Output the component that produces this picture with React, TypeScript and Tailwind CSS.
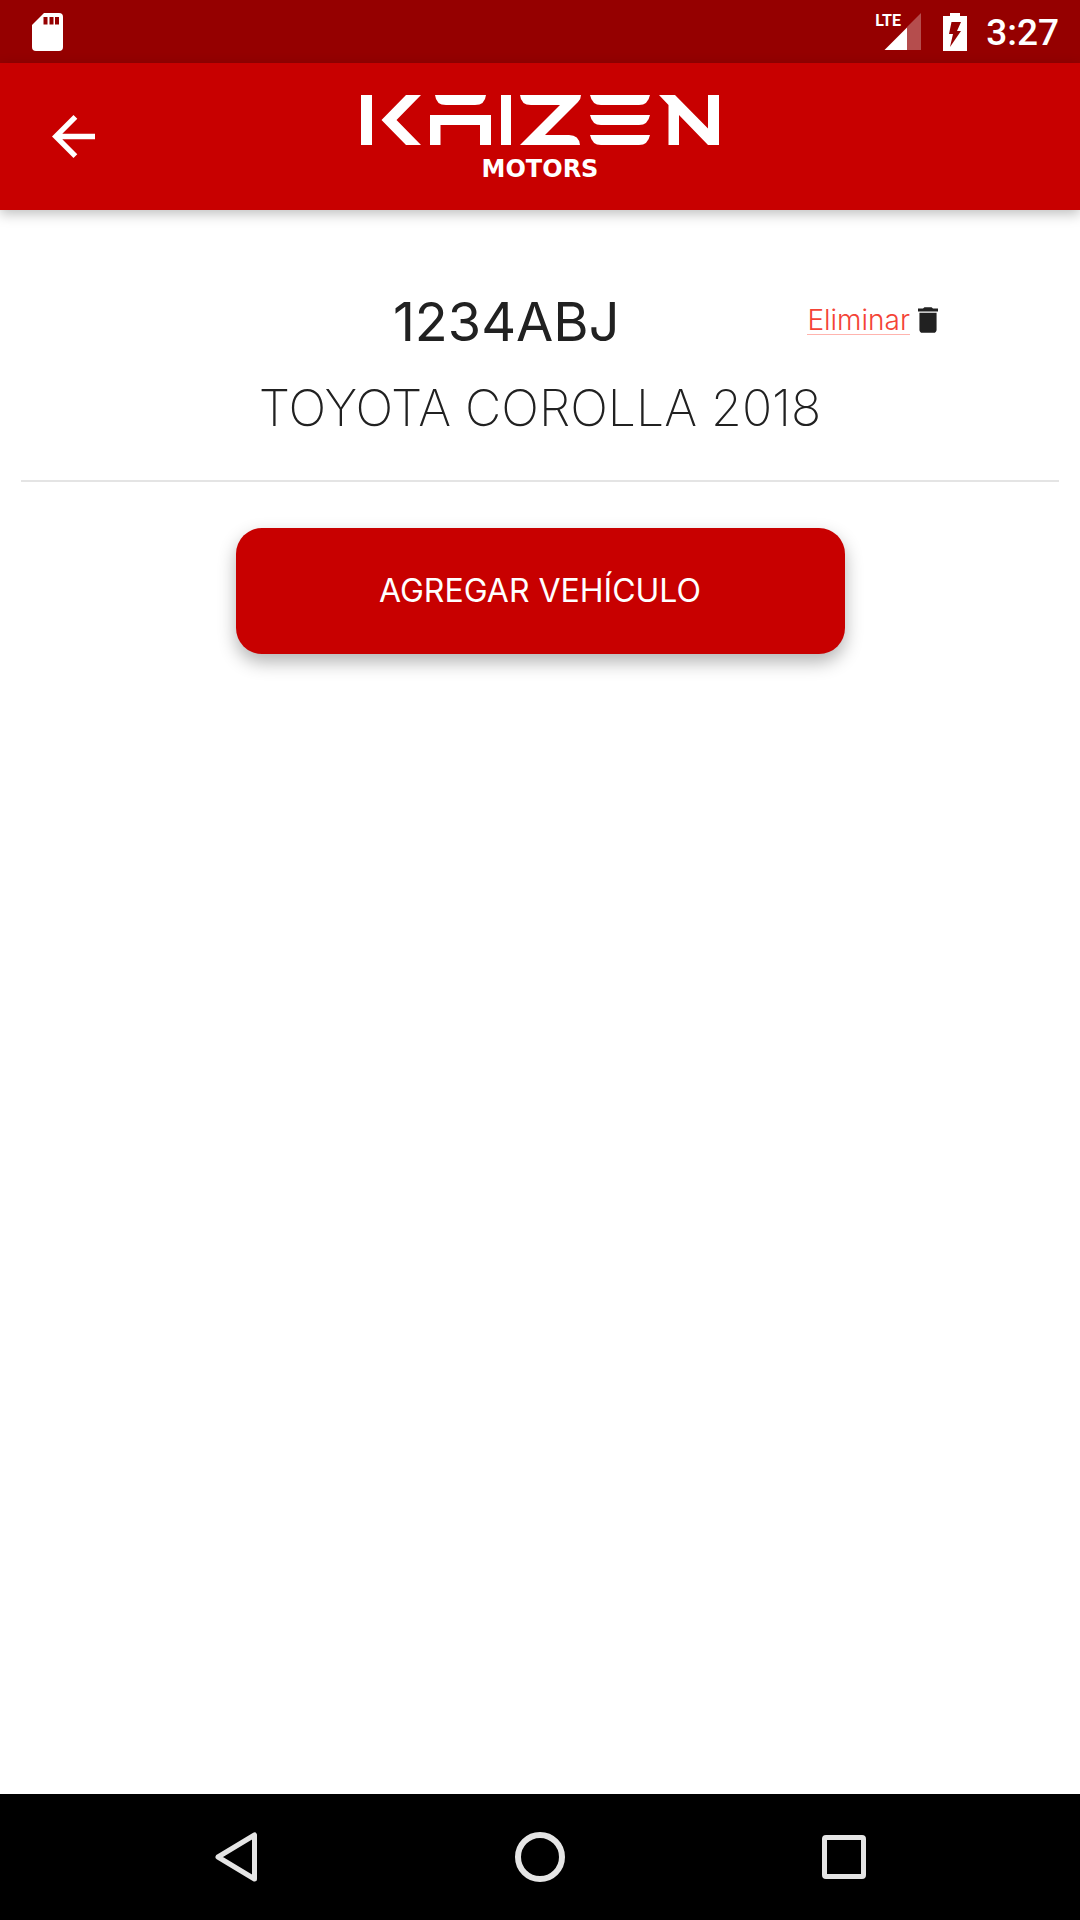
import { useState } from "react";

type Vehicle = {
  plate: string;
  model: string;
};

const initialVehicles: Vehicle[] = [{ plate: "1234ABJ", model: "TOYOTA COROLLA 2018" }];

function StatusBar() {
  return (
    <div className="flex h-[63px] items-center justify-between bg-[#950000] pl-8 pr-[21px] text-white">
      {/* SD card */}
      <svg className="h-[38px] w-8" viewBox="0 0 32 38" fill="none">
        <path
          d="M12 0H27Q31 0 31 4V34Q31 38 27 38H4Q0 38 0 34V12Z"
          fill="currentColor"
        />
        <path d="M11.500 4h4v7.500h-4zM17.500 4h4v7.500h-4zM23 4h4v7.500h-4z" fill="#950000" />
      </svg>

      <div className="flex items-center">
        <div className="relative h-[37px] w-[46px]">
          <span className="absolute left-0 top-0 font-['Roboto',sans-serif] text-base font-bold leading-4">
            LTE
          </span>
          <svg className="h-full w-full" viewBox="0 0 46 37" fill="currentColor">
            <path d="M46 0V37H32V14Z" opacity="0.3" />
            <path d="M32 14.500V37H9.500Z" />
          </svg>
        </div>
        <svg className="ml-[22px] h-[38px] w-6" viewBox="0 0 24 38" fill="none">
          <path d="M7 0H17V3H24V38H0V3H7Z" fill="currentColor" />
          <path d="M8.500 9H18L14 18H18L7 34L10 21H6Z" fill="#950000" />
        </svg>
        <span className="ml-[19px] pt-[3px] font-['Roboto',sans-serif] text-[37px] font-medium leading-[38px]">
          3:27
        </span>
      </div>
    </div>
  );
}

function Logo() {
  return (
    <div className="flex flex-col items-center pt-0.5 text-white">
      <svg className="h-[50px] w-[358px]" viewBox="0 0 358 50" fill="currentColor" role="img" aria-label="Kaizen">
        <path d="M0 0H11V50H0Z" />
        <path d="M45 0H60L35.500 25L60 50H45L20.500 25Z" />
        <path d="M74 0H125Q124 10 114 10H85Q75 10 74 0Z" />
        <path d="M69 20H130V50H119V30H79.500V50H69Z" />
        <path d="M140 0H150V50H140Z" />
        <path d="M159 0H220Q220 4 217 7L184 40H208Q218 40 219 50H159L199 10H170Q160 10 159 0Z" />
        <path d="M229 0H289Q287 10 278 10H240Q231 10 229 0Z" />
        <path d="M229 20H289Q287 30 278 30H240Q231 30 229 20Z" />
        <path d="M229 40H289Q287 50 278 50H240Q231 50 229 40Z" />
        <path d="M298 0H314L347 33.500V0H358V50H347L318 20V50H307.500V10Z" />
      </svg>
      <span className="mt-3 font-['DejaVu_Sans',sans-serif] text-2xl font-bold leading-6">MOTORS</span>
    </div>
  );
}

function Header() {
  return (
    <header className="z-10 grid h-[147px] grid-cols-[1fr_auto_1fr] items-center bg-[#c80000] shadow-[0_4px_12px_rgba(0,0,0,0.25)]">
      <button type="button" aria-label="Volver" className="ml-[52px] w-11 justify-self-start text-white">
        <svg className="h-[43px] w-[43px]" viewBox="4 4 16 16" fill="currentColor">
          <path d="M20 11H7.830l5.590-5.590L12 4l-8 8 8 8 1.410-1.410L7.830 13H20v-2z" />
        </svg>
      </button>
      <Logo />
    </header>
  );
}

function VehicleRow({ vehicle, onDelete }: { vehicle: Vehicle; onDelete: () => void }) {
  return (
    <li className="border-b-2 border-[#e4e4e4] pb-[42px] text-[#212121]">
      <div className="flex items-center pl-[184px] pr-[121px]">
        <h2 className="flex-1 text-center text-[54px] leading-[72px]">{vehicle.plate}</h2>
        <button type="button" onClick={onDelete} className="flex items-center gap-2 pb-1">
          <span className="border-b border-[#ffb4ae] text-[28px] font-light leading-7 text-[#f44336]">
            Eliminar
          </span>
          <svg className="h-[26px] w-5" viewBox="5 3 14 18" fill="currentColor">
            <path d="M6 19c0 1.100.9 2 2 2h8c1.100 0 2-.9 2-2V7H6v12zM19 4h-3.500l-1-1h-5l-1 1H5v2h14V4z" />
          </svg>
        </button>
      </div>
      <p className="mt-5 text-center text-[50px] font-extralight leading-[60px]">{vehicle.model}</p>
    </li>
  );
}

function NavBar() {
  return (
    <nav className="flex h-[126px] items-center bg-black px-[84px] text-[#e5e5e5]">
      <button type="button" aria-label="Atrás" className="flex flex-1 justify-center">
        <svg className="h-[50px] w-[42px]" viewBox="0 0 42 50" fill="none" stroke="currentColor" strokeWidth="5" strokeLinejoin="round">
          <path d="M39.500 3V47L3 25Z" />
        </svg>
      </button>
      <button type="button" aria-label="Inicio" className="flex flex-1 justify-center">
        <span className="h-[50px] w-[50px] rounded-full border-[6px] border-current" />
      </button>
      <button type="button" aria-label="Recientes" className="flex flex-1 justify-center">
        <span className="h-11 w-11 rounded border-[5px] border-current" />
      </button>
    </nav>
  );
}

export default function App() {
  const [vehicles, setVehicles] = useState<Vehicle[]>(initialVehicles);

  function removeVehicle(plate: string) {
    setVehicles(vehicles.filter((v) => v.plate !== plate));
  }

  return (
    <div className="flex min-h-screen flex-col bg-white font-['Inter',sans-serif]">
      <StatusBar />
      <Header />

      <main className="flex flex-1 flex-col items-center px-[21px] pt-[76px]">
        <ul className="w-full">
          {vehicles.map((v) => (
            <VehicleRow key={v.plate} vehicle={v} onDelete={() => removeVehicle(v.plate)} />
          ))}
        </ul>

        <button
          type="button"
          className="mt-[46px] h-[126px] w-[609px] max-w-full rounded-[26px] bg-[#c80000] text-[32px] text-white shadow-[0_8px_18px_rgba(0,0,0,0.3)]"
        >
          AGREGAR VEHÍCULO
        </button>
      </main>

      <NavBar />
    </div>
  );
}
